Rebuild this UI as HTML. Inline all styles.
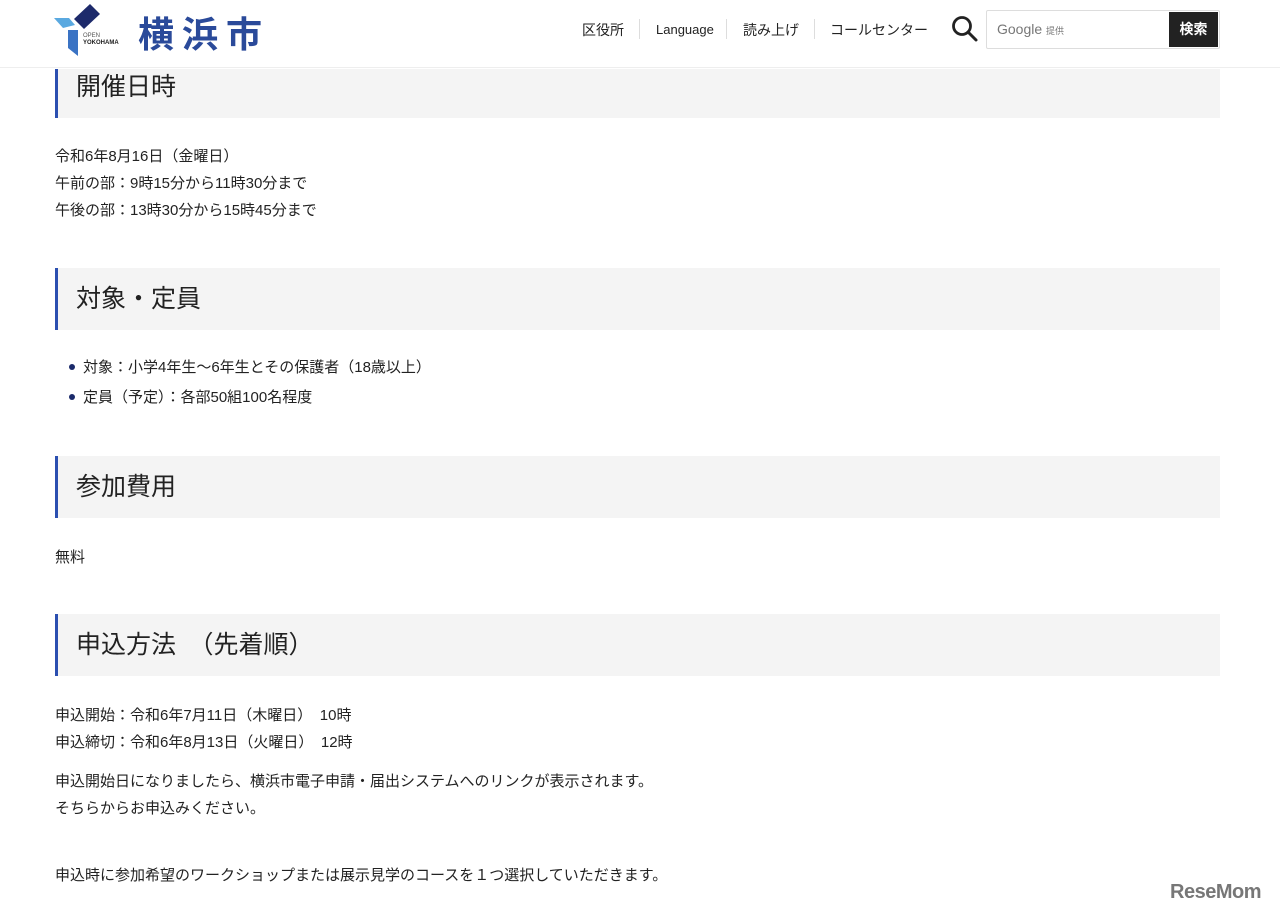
<!DOCTYPE html>
<html><head><meta charset="utf-8"><style>
*{margin:0;padding:0;box-sizing:border-box}
body{width:1280px;height:915px;overflow:hidden;background:#fff;font-family:"Liberation Sans","Noto Sans CJK JP",sans-serif;color:#222;position:relative}
.hdr{position:absolute;left:0;top:0;width:1280px;height:68px;border-bottom:1px solid #eee;background:#fff}
.nav{position:absolute;top:20px;font-size:14px;color:#222}
.sep{position:absolute;top:19px;width:1px;height:20px;background:#ddd}
.h{position:absolute;left:55px;width:1165px;background:#f4f4f4;border-left:3px solid #2b4fb0;font-size:25px;padding-left:18px;color:#222}
.t{position:absolute;left:55px;font-size:15px;line-height:27px}
.b{position:absolute;left:70px;font-size:15px}
.b:before{content:"";position:absolute;left:-1px;top:8px;width:6px;height:6px;border-radius:50%;background:#1a2a6a}
.b span{margin-left:13px}
</style></head><body>
<div class="hdr">
<svg style="position:absolute;left:54px;top:3px" width="50" height="54" viewBox="0 0 50 54">
<polygon points="20,16 36,1 46,11 30,26" fill="#1d2a6b"/>
<polygon points="0,15 15,15 21,22 9,25" fill="#5aa9e0"/>
<polygon points="14,27 24,27 24,53 14,45" fill="#3a73c4"/>
</svg>
<div style="position:absolute;left:83px;top:33px;font-size:6px;color:#555;line-height:7px">OPEN<br><b style="color:#222">YOKOHAMA</b></div>
<div style="position:absolute;left:138px;top:6px;font-size:36px;font-weight:bold;color:#2a4a9a;letter-spacing:8px">横浜市</div>
<div class="nav" style="left:582px">区役所</div>
<div class="sep" style="left:639px"></div>
<div class="nav" style="left:656px;font-size:13px;top:22px">Language</div>
<div class="sep" style="left:726px"></div>
<div class="nav" style="left:743px">読み上げ</div>
<div class="sep" style="left:814px"></div>
<div class="nav" style="left:830px">コールセンター</div>
<svg style="position:absolute;left:951px;top:15px" width="28" height="28" viewBox="0 0 28 28"><circle cx="11" cy="11" r="8.5" fill="none" stroke="#222" stroke-width="2.8"/><line x1="17" y1="17" x2="25" y2="25" stroke="#222" stroke-width="3" stroke-linecap="round"/></svg>
<div style="position:absolute;left:986px;top:10px;width:234px;height:39px;border:1px solid #ddd;border-radius:2px"></div>
<div style="position:absolute;left:997px;top:21px;font-size:14px;color:#777">Google <span style="font-size:9px">提供</span></div>
<div style="position:absolute;left:1169px;top:12px;width:49px;height:35px;background:#222;color:#fff;font-size:14px;font-weight:bold;text-align:center;line-height:35px">検索</div>
</div>
<div class="h" style="top:69px;height:49px;line-height:37px">開催日時</div>
<div class="t" style="top:143px">令和6年8月16日（金曜日）<br>午前の部：9時15分から11時30分まで<br>午後の部：13時30分から15時45分まで</div>
<div class="h" style="top:268px;height:62px;line-height:62px">対象・定員</div>
<div class="b" style="top:356px"><span>対象：小学4年生～6年生とその保護者（18歳以上）</span></div>
<div class="b" style="top:386px"><span>定員（予定）：各部50組100名程度</span></div>
<div class="h" style="top:456px;height:62px;line-height:62px">参加費用</div>
<div class="t" style="top:544px">無料</div>
<div class="h" style="top:614px;height:62px;line-height:62px">申込方法　（先着順）</div>
<div class="t" style="top:702px">申込開始：令和6年7月11日（木曜日）　10時<br>申込締切：令和6年8月13日（火曜日）　12時</div>
<div class="t" style="top:768px">申込開始日になりましたら、横浜市電子申請・届出システムへのリンクが表示されます。<br>そちらからお申込みください。</div>
<div class="t" style="top:862px">申込時に参加希望のワークショップまたは展示見学のコースを１つ選択していただきます。</div>
<div style="position:absolute;left:1170px;top:881px;font-size:20px;font-weight:bold;color:#777;letter-spacing:-0.5px">ReseMom</div>
</body></html>
